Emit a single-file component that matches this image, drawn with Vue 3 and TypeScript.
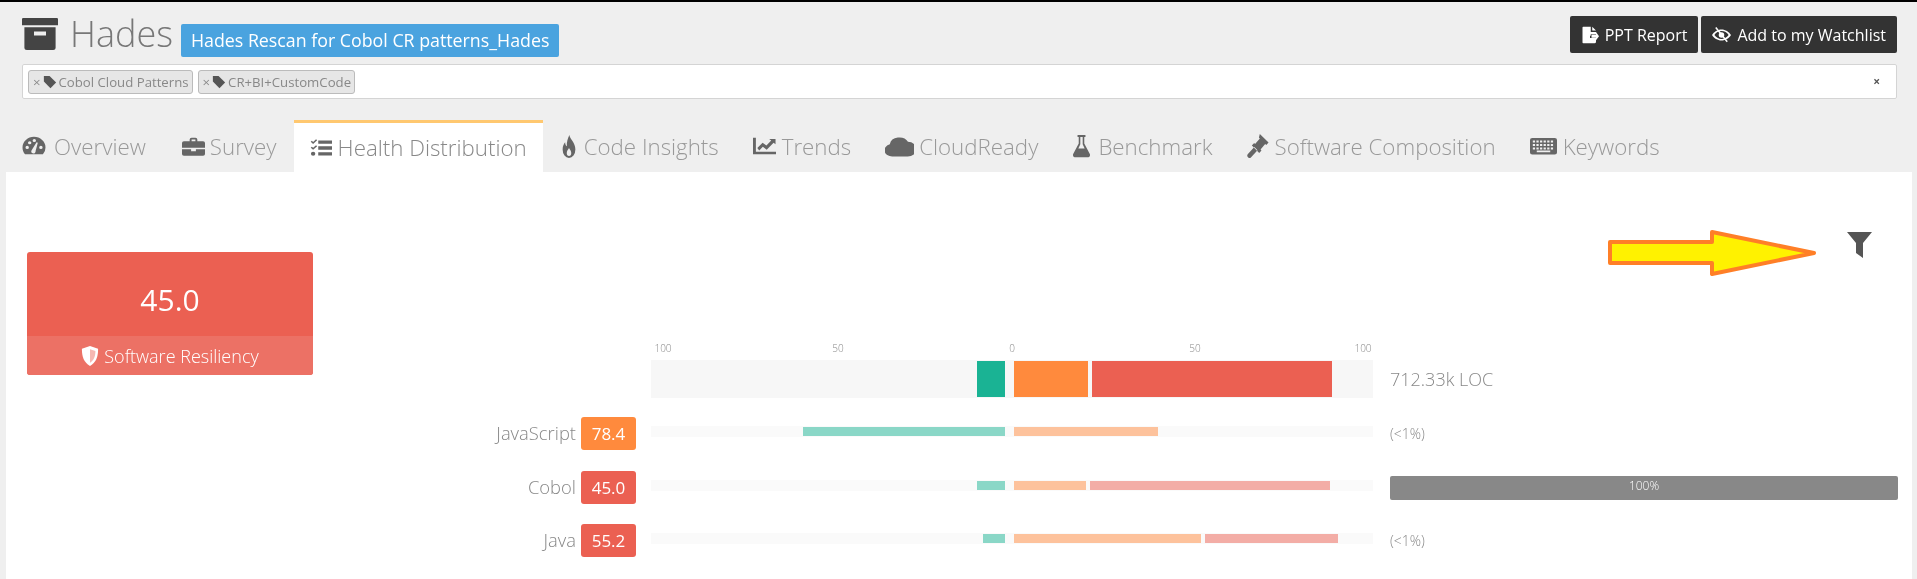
<script setup lang="ts">
interface Tab {
  label: string
  w: number
  h: number
  gap: number
  d: string
  active?: boolean
}

interface LangRow {
  name: string
  score: string
  tone: string
  neg: number
  orange: number
  red: number
  share: string
  full?: boolean
}

// key holes for the keyboard icon
const keyHoles = (): string => {
  let out = ''
  for (const y of [6.5, 10, 13.5]) {
    for (let x = 2.5; x < 21; x += 3.2) {
      out += `M${x} ${y}h2v2h-2z`
    }
  }
  return out + 'M6 16.6h12v1.6H6z'
}

const tabs: Tab[] = [
  { label: 'Overview', w: 24, h: 22, gap: 8, d: 'M12 2A11.5 11.5 0 0 0 .5 13.5c0 2.9 1 5.5 2.6 7.5h17.8a11.5 11.5 0 0 0 2.6-7.5A11.5 11.5 0 0 0 12 2zM3.5 13.5a1.7 1.7 0 1 0 3.4 0a1.7 1.7 0 1 0-3.4 0zM6 8.5a1.7 1.7 0 1 0 3.4 0a1.7 1.7 0 1 0-3.4 0zM10.6 6a1.7 1.7 0 1 0 3.4 0a1.7 1.7 0 1 0-3.4 0zM17.2 13.5a1.7 1.7 0 1 0 3.4 0a1.7 1.7 0 1 0-3.4 0zM9.8 16.4 14.6 8l1.2.5-2.2 9a2.2 2.2 0 1 1-3.8-1.1z' },
  { label: 'Survey', w: 23, h: 21, gap: 5, d: 'M8 6V4a2 2 0 0 1 2-2h4a2 2 0 0 1 2 2v2h6a2 2 0 0 1 2 2v5.5H0V8a2 2 0 0 1 2-2zM10 4v2h4V4zM0 15h9.5v2.5h5V15H24v5.5a2 2 0 0 1-2 2H2a2 2 0 0 1-2-2z' },
  { label: 'Health Distribution', w: 22, h: 20, gap: 6, active: true, d: 'M9 3h15v4H9zM9 10h15v4H9zM9 17h15v4H9zM.8 4.6 2 3.4l1.4 1.4L6.6 1.6 7.8 2.8 3.4 7.2zM.8 11.6 2 10.4l1.4 1.4 3.2-3.2 1.2 1.2-4.4 4.4zM1 19a2.4 2.4 0 1 0 4.8 0a2.4 2.4 0 1 0-4.8 0z' },
  { label: 'Code Insights', w: 18, h: 24, gap: 6, d: 'M12.5 1c1 4.5 8 7.5 8 14.5a8.5 8.5 0 0 1-17 0c0-3.4 1.6-5.6 3.4-7.2 0 2.2.8 3.4 2.2 4C8.6 8 10.6 4 12.5 1zM12 14c-1.2 1.7-3 2.7-3 5a3 3 0 0 0 6 0c0-2.3-1.8-3.3-3-5z' },
  { label: 'Trends', w: 23, h: 20, gap: 6, d: 'M0 2h3v17h21v3H0zM4.5 14.5 10 8l4 3.500 5-6-2.200-2H23.500V10l-2-2-7.200 8.500-4-3.500-3.800 4.500z' },
  { label: 'CloudReady', w: 29, h: 24, gap: 5, d: 'M6 22.500A6.300 6.300 0 0 1 4 10.200 8 8 0 0 1 19 7.800 7.300 7.300 0 0 1 18.500 22.500z' },
  { label: 'Benchmark', w: 19, h: 24, gap: 7, d: 'M7 1h10v2h-1.500v6.500L22.500 20a2.200 2.200 0 0 1-2 3.200h-17a2.200 2.200 0 0 1-2-3.200L8.500 9.500V3H7zM10.500 3v7.200L8 14.500h8l-2.500-4.300V3z' },
  { label: 'Software Composition', w: 22, h: 24, gap: 6, d: 'M14 0l9.500 8.500-2.500 2.500-1.200-1-5 5.500 1 1-2.500 2.500-8-7.500 2.500-2.500 1 1 5.200-5.500-1-1zM8 13l3.500 3.200-7 7a2.200 2.200 0 0 1-3.500-3.200z' },
  { label: 'Keywords', w: 27, h: 24, gap: 6, d: 'M2 4h20a2 2 0 0 1 2 2v12.500a2 2 0 0 1-2 2H2a2 2 0 0 1-2-2V6a2 2 0 0 1 2-2z' + keyHoles() },
]

const tags = ['Cobol Cloud Patterns', 'CR+BI+CustomCode']
const ticks = ['100', '50', '0', '50', '100']

const rows: LangRow[] = [
  { name: 'JavaScript', score: '78.4', tone: 'orange', neg: 57, orange: 40, red: 0, share: '(<1%)' },
  { name: 'Cobol', score: '45.0', tone: 'red', neg: 8, orange: 20, red: 67, share: '100%', full: true },
  { name: 'Java', score: '55.2', tone: 'red', neg: 6.2, orange: 52, red: 37, share: '(<1%)' },
]
</script>

<template>
  <div class="page">
    <header class="top soft">
      <div class="title-row">
        <svg class="archive" viewBox="0 0 30 32" preserveAspectRatio="none">
          <path d="M1 1h28a1 1 0 0 1 1 1v6H0V2a1 1 0 0 1 1-1z" />
          <path fill-rule="evenodd" d="M2 10h26v20a2 2 0 0 1-2 2H4a2 2 0 0 1-2-2zM10 14v4h10v-4z" />
        </svg>
        <h1 class="name">Hades</h1>
        <span class="scan-label">Hades Rescan for Cobol CR patterns_Hades</span>
        <div class="actions">
          <button class="dark-btn">
            <svg class="btn-icon" viewBox="0 0 24 24">
              <path d="M3 1h10v7h7v3h-7v2h-1v3h8v5a2 2 0 0 1-2 2H3a1 1 0 0 1-1-1V2a1 1 0 0 1 1-1zM15 1l5 5h-5zM14 11.500h6V8l4 5.500-4 5.500v-3.500h-6z" />
            </svg>
            PPT Report
          </button>
          <button class="dark-btn">
            <svg class="btn-icon eye" viewBox="0 0 24 20">
              <path fill-rule="evenodd" d="M12 3c5 0 9.500 3 12 7-2.500 4-7 7-12 7S2.500 14 0 10c2.500-4 7-7 12-7zM12 5c-3.700 0-7 2-9 5 2 3 5.300 5 9 5s7-2 9-5c-2-3-5.300-5-9-5zM12 6.500a3.500 3.500 0 1 1 0 7 3.500 3.500 0 0 1 0-7z" />
              <path d="M4 1l1.500-1L20 18l-1.500 1z" />
            </svg>
            Add to my Watchlist
          </button>
        </div>
      </div>
      <div class="tag-box">
        <span v-for="tag in tags" :key="tag" class="chip">
          <span class="chip-x">×</span>
          <svg class="tag-icon" viewBox="0 0 16 16">
            <path d="M1 1h6.500L15 8.500 8.500 15 1 7.500z" />
          </svg>
          {{ tag }}
        </span>
        <span class="box-clear">×</span>
      </div>
    </header>

    <nav class="tabs soft">
      <a v-for="tab in tabs" :key="tab.label" class="tab" :class="{ active: tab.active }">
        <svg
          class="tab-icon"
          viewBox="0 0 24 24"
          preserveAspectRatio="none"
          :width="tab.w"
          :height="tab.h"
          :style="{ marginRight: tab.gap + 'px' }"
        >
          <path fill-rule="evenodd" :d="tab.d" />
        </svg>
        {{ tab.label }}
      </a>
    </nav>

    <main class="panel">
      <section class="score-card soft">
        <div class="score-value">45.0</div>
        <div class="score-foot">
          <svg class="shield" viewBox="0 0 20 22">
            <path d="M10 0l9 3c0 9-2 15-9 19C3 18 1 12 1 3z" />
            <path class="shield-inner" d="M10 3.500l6 2c0 6-1.500 10-6 13z" />
          </svg>
          Software Resiliency
        </div>
      </section>

      <section class="results">
        <div class="filter-row">
          <svg class="arrow" viewBox="0 0 210 46">
            <path d="M2 12H104V2L206 23 104 44V33H2z" fill="#fff200" stroke="#ff7f27" stroke-width="4" stroke-linejoin="round" />
          </svg>
          <svg class="funnel soft" viewBox="0 0 25 26">
            <path d="M0 0h25L16 11v15l-7-5V11z" />
          </svg>
        </div>

        <div class="chart soft">
          <div class="axis">
            <span v-for="(tick, i) in ticks" :key="i">{{ tick }}</span>
          </div>
          <div />

          <div class="track main-track">
            <div class="half neg"><i class="seg green" style="width: 8%" /></div>
            <div class="half pos">
              <i class="seg orange" style="width: 20.6%" />
              <i class="seg red" style="width: 67%" />
            </div>
          </div>
          <div class="loc">712.33k LOC</div>

          <template v-for="row in rows" :key="row.name">
            <div class="lang">
              <span class="lang-name">{{ row.name }}</span>
              <span class="badge" :class="row.tone">{{ row.score }}</span>
            </div>
            <div class="lang-bars">
              <div class="track row-track">
                <div class="half neg"><i class="seg green" :style="{ width: row.neg + '%' }" /></div>
                <div class="half pos">
                  <i class="seg orange" :style="{ width: row.orange + '%' }" />
                  <i v-if="row.red" class="seg red" :style="{ width: row.red + '%' }" />
                </div>
              </div>
            </div>
            <div class="share">
              <div v-if="row.full" class="share-bar">{{ row.share }}</div>
              <span v-else>{{ row.share }}</span>
            </div>
          </template>
        </div>
      </section>
    </main>
  </div>
</template>

<style scoped>
.page {
  height: 579px;
  box-sizing: border-box;
  display: flex;
  flex-direction: column;
  background: #efefef;
  border-top: 2px solid #000;
  font-family: "Open Sans", "Noto Sans", sans-serif;
  overflow: hidden;
}

/* the reference is a rescaled capture, everything but the arrow is a bit soft */
.soft {
  filter: blur(0.5px);
}

.top {
  padding: 14px 20px 0 22px;
}

.title-row {
  display: flex;
  align-items: flex-start;
  height: 48px;
}

.archive {
  width: 36px;
  height: 33px;
  margin-top: 1px;
  fill: #444;
}

.name {
  margin: -4px 0 0 12px;
  font-size: 36px;
  line-height: 44px;
  font-weight: 300;
  color: #777;
}

.scan-label {
  margin: 8px 0 0 8px;
  padding: 0 10px;
  height: 33px;
  line-height: 33px;
  border-radius: 2px;
  background: #4aa3df;
  color: #fff;
  font-size: 17.8px;
  white-space: nowrap;
}

.actions {
  margin-left: auto;
  display: flex;
  gap: 3px;
}

.dark-btn {
  display: flex;
  align-items: center;
  gap: 6px;
  height: 37px;
  padding: 0 11px;
  border: 0;
  border-radius: 2px;
  background: #333;
  color: #fff;
  font-family: inherit;
  font-size: 16px;
  white-space: nowrap;
}

.btn-icon {
  width: 18px;
  height: 18px;
  fill: #fff;
}

.btn-icon.eye {
  width: 19px;
  height: 16px;
}

.tag-box {
  display: flex;
  align-items: center;
  gap: 5px;
  height: 35px;
  box-sizing: border-box;
  padding: 0 16px 0 5px;
  background: #fff;
  border: 1px solid #d4d4d4;
  border-radius: 2px;
}

.chip {
  display: flex;
  align-items: center;
  height: 24px;
  box-sizing: border-box;
  padding: 0 3px 0 4px;
  background: #e6e6e6;
  border: 1px solid #bbb;
  border-radius: 3px;
  color: #888;
  font-size: 13.2px;
  white-space: nowrap;
}

.chip-x {
  color: #888;
  margin-right: 2px;
}

.tag-icon {
  width: 14px;
  height: 14px;
  margin-right: 2px;
  fill: #555;
}

.box-clear {
  margin-left: auto;
  color: #555;
  font-size: 12px;
  font-weight: 700;
}

.tabs {
  display: flex;
  height: 52px;
  margin: 21px 0 0 5px;
}

.tab {
  display: flex;
  align-items: center;
  padding: 0 17px;
  color: #999;
  font-size: 22.3px;
  font-weight: 300;
  white-space: nowrap;
}

.tab:first-child {
  padding-right: 19px;
}

.tab.active {
  background: #fff;
  border-top: 3px solid #ffc870;
  padding: 0 16px;
  box-sizing: border-box;
  color: #888;
}

.tab-icon {
  fill: #666;
  flex: none;
}

.panel {
  flex: 1;
  margin: 0 5px 0 6px;
  padding: 0 14px 0 21px;
  background: #fff;
  display: flex;
  align-items: flex-start;
}

.score-card {
  flex: none;
  width: 286px;
  margin-top: 80px;
  border-radius: 3px;
  overflow: hidden;
  background: #eb6052;
  color: #fff;
  text-align: center;
}

.score-value {
  height: 84px;
  line-height: 96px;
  font-size: 30px;
}

.score-foot {
  height: 39px;
  display: flex;
  align-items: center;
  justify-content: center;
  gap: 5px;
  background: #ec7165;
  font-size: 18px;
  font-weight: 300;
}

.shield {
  width: 18px;
  height: 20px;
  fill: #fff;
}

.shield-inner {
  fill: #f6b8b2;
}

.results {
  flex: 1;
  min-width: 0;
}

.filter-row {
  display: flex;
  align-items: flex-start;
  justify-content: flex-end;
  height: 46px;
  margin: 58px 0 66px;
  padding-right: 26px;
}

.arrow {
  width: 210px;
  height: 46px;
}

.funnel {
  width: 25px;
  height: 26px;
  margin: 2px 0 0 29px;
  fill: #555;
}

.chart {
  display: grid;
  grid-template-columns: 1fr 722px 508px;
  column-gap: 17px;
}

.axis {
  grid-column: 2;
  display: grid;
  grid-template-columns: 175px 174px 183px 168px 22px;
  height: 18px;
  font-size: 10px;
  font-weight: 300;
  line-height: 12px;
  color: #888;
}

.axis span {
  width: 24px;
  text-align: center;
}

.chart > div:nth-child(2) {
  grid-column: 3;
}

.track {
  display: flex;
  gap: 9px;
}

.main-track {
  grid-column: 2;
  height: 38px;
  background: #f7f7f7;
  padding: 1px 0;
  box-sizing: border-box;
  margin-bottom: 19px;
}

.row-track {
  height: 11px;
  margin-top: 9px;
  background: #fafafa;
  padding: 1px 0;
  box-sizing: border-box;
}

.half {
  display: flex;
  gap: 4px;
}

.half.neg {
  width: 354px;
  justify-content: flex-end;
}

.half.pos {
  width: 359px;
}

.seg {
  display: block;
}

.seg.green {
  background: #1ab394;
}

.seg.orange {
  background: #ff8a3d;
}

.seg.red {
  background: #eb6052;
}

.row-track .seg {
  opacity: 0.5;
}

.loc {
  grid-column: 3;
  align-self: start;
  padding-top: 7px;
  font-size: 18px;
  font-weight: 300;
  color: #888;
}

.lang {
  grid-column: 1;
  display: flex;
  justify-content: flex-end;
  align-items: center;
  gap: 5px;
  height: 33px;
  margin: 0 -2px 20.5px 0;
}

.lang-name {
  font-size: 18.4px;
  font-weight: 300;
  color: #888;
  margin-top: -2px;
}

.badge {
  width: 55px;
  height: 33px;
  line-height: 33px;
  border-radius: 3px;
  text-align: center;
  color: #fff;
  font-size: 17px;
}

.badge.orange {
  background: #ff8a3d;
}

.badge.red {
  background: #eb6052;
}

.lang-bars {
  grid-column: 2;
}

.share {
  grid-column: 3;
  font-size: 14px;
  font-weight: 300;
  color: #888;
  padding-top: 7px;
}

.share-bar {
  height: 24px;
  margin-top: -2px;
  line-height: 20px;
  text-align: center;
  border-radius: 2px;
  background: #888;
  color: #fff;
  font-size: 12px;
}
</style>

<style>
body {
  overflow: hidden;
}
</style>
